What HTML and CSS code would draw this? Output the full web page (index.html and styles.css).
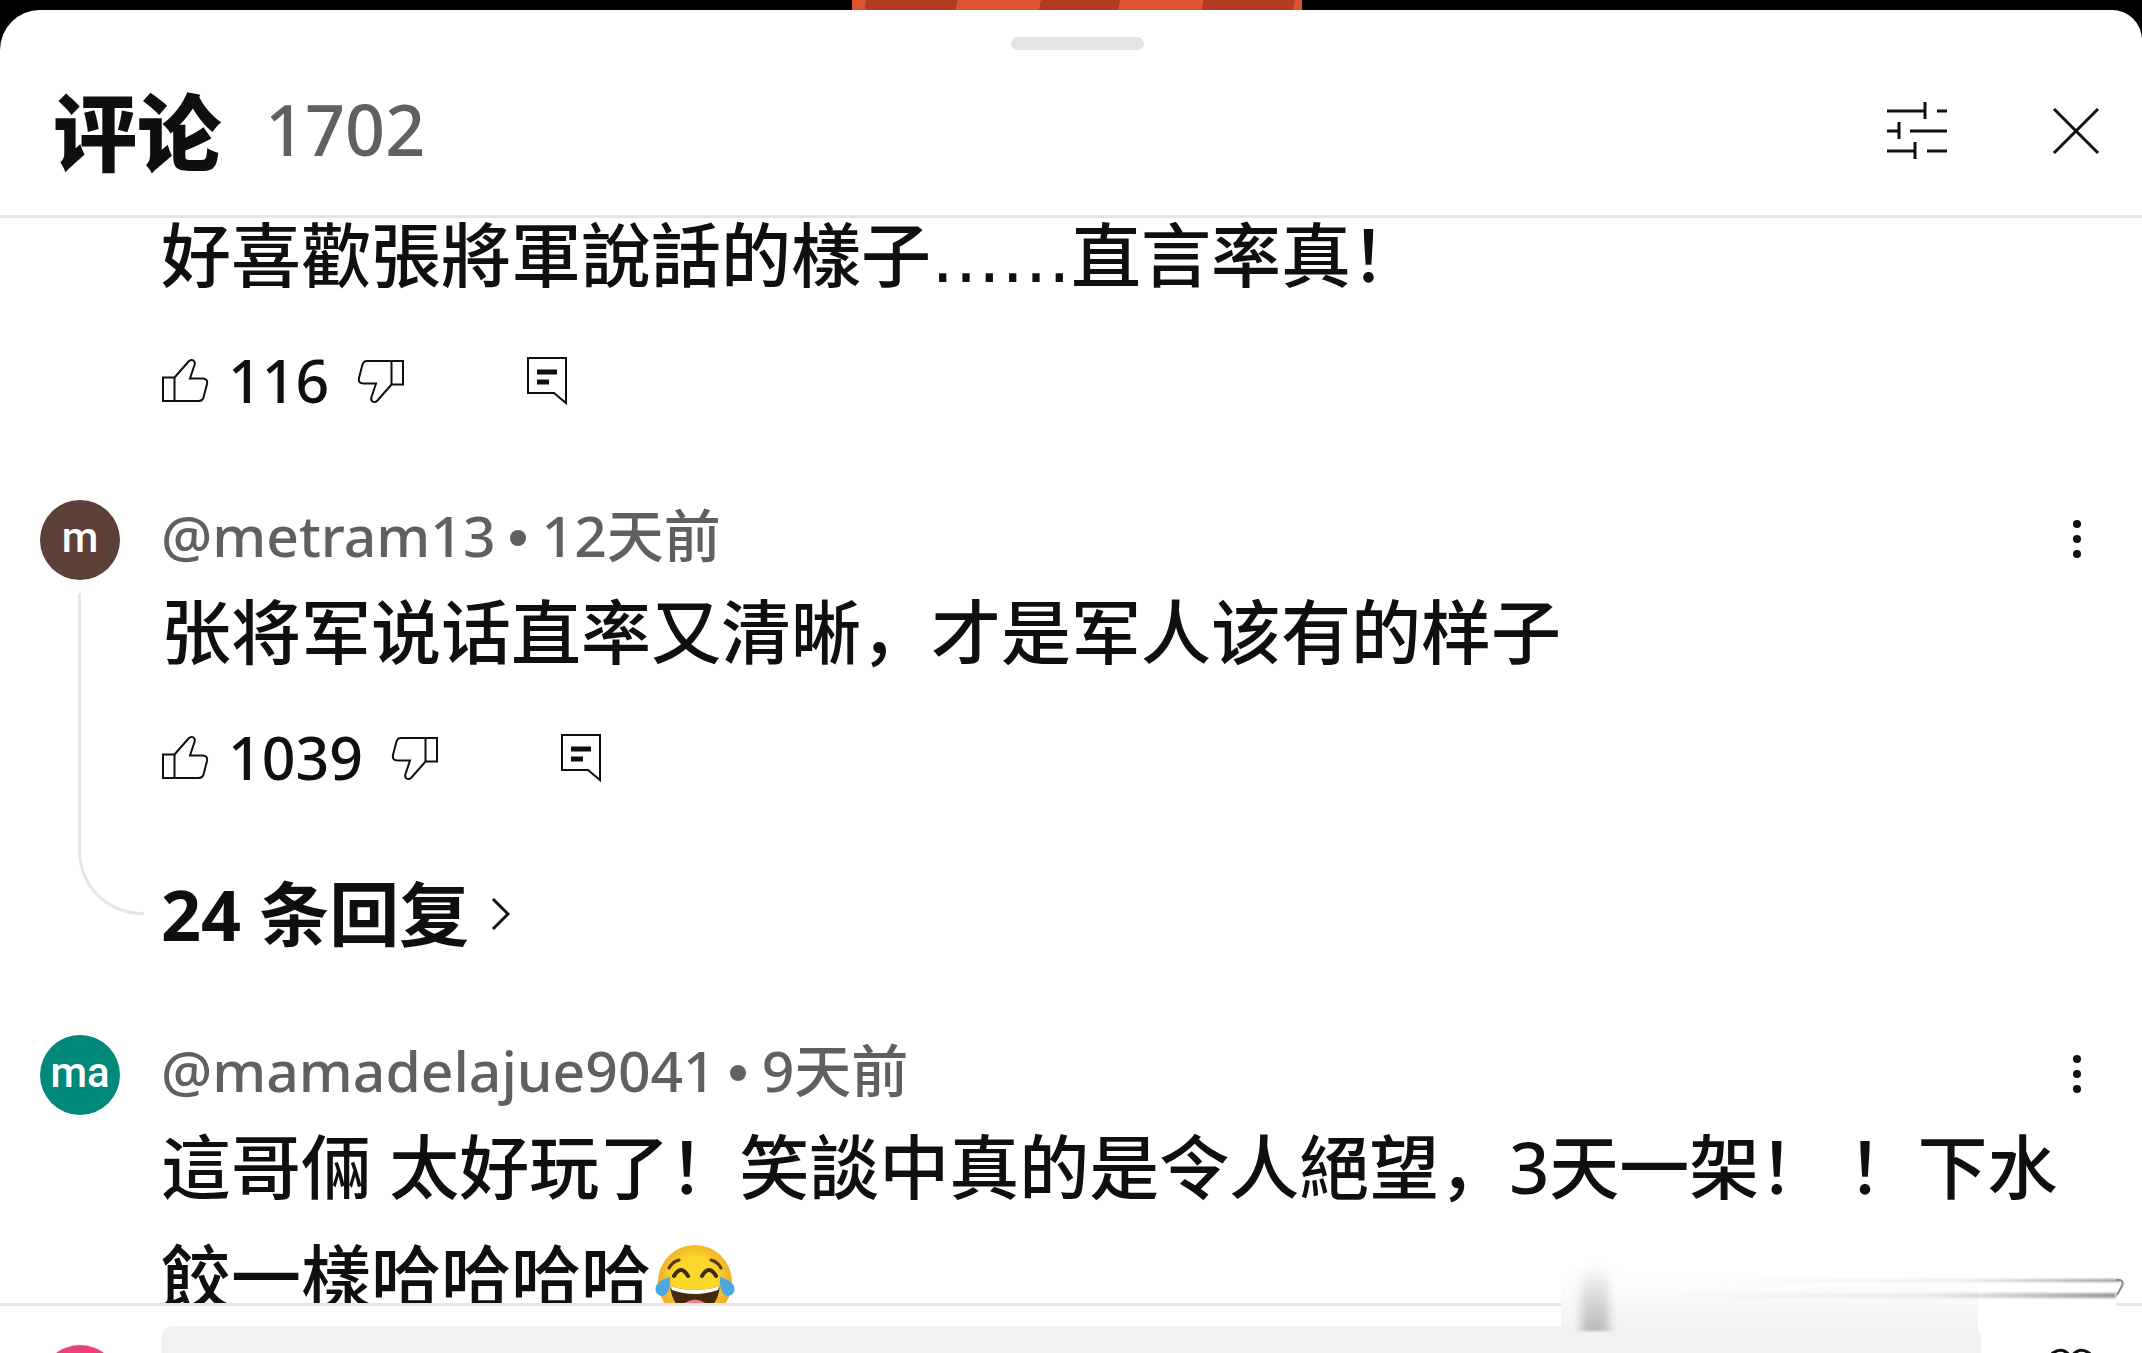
FILE: index.html
```html
<!DOCTYPE html>
<html lang="zh-CN">
<head>
  <meta charset="UTF-8" />
  <meta name="viewport" content="width=device-width, initial-scale=1.0" />
  <title>评论</title>
  <link rel="stylesheet" href="styles.css">
</head>
<body>

  <!-- shared icons -->
  <svg class="sprite" aria-hidden="true">
    <symbol id="icon-like" viewBox="0 0 48 48">
      <path d="M2 19.500H13.500V43H2ZM13.500 19.500L27.500 3.500Q30 1 32.500 2.500Q34.500 4 33.500 7L29 20.500H41.500Q47 20.500 46 26L42.500 39.500Q41.500 43 38 43H13.500"/>
    </symbol>
    <symbol id="icon-dislike" viewBox="0 0 48 48">
      <path d="M46 26.500H34.500V3H46ZM34.500 26.500L20.500 42.500Q18 45 15.500 43.500Q13.500 42 14.500 39L19 25.500H6.500Q1 25.500 2 20L5.500 6.500Q6.500 3 10 3H34.500"/>
    </symbol>
    <symbol id="icon-reply" viewBox="0 0 42 52">
      <path d="M2 2H40V47L28 37H2Z"/>
      <path class="thick" d="M11 16H31M11 26H23"/>
    </symbol>
    <symbol id="icon-more" viewBox="0 0 10 40">
      <circle cx="5" cy="5" r="4"/><circle cx="5" cy="20" r="4"/><circle cx="5" cy="35" r="4"/>
    </symbol>
  </svg>

  <div class="video"><div class="video-frame"></div></div>

  <main class="sheet">
    <div class="handle"></div>
    <header class="header">
      <h1>评论</h1>
      <span class="count">1702</span>
      <button class="icon-btn filter" aria-label="排序">
        <svg width="60" height="58" viewBox="0 0 60 58"><path d="M0 9H38M38 0V17M50 9H60M0 29H12M12 20V37M23 29H60M0 49H28M28 40V57M40 49H60"/></svg>
      </button>
      <button class="icon-btn close" aria-label="关闭">
        <svg width="48" height="48" viewBox="0 0 48 48"><path d="M2 2L46 46M46 2L2 46"/></svg>
      </button>
    </header>

    <section class="comments">
      <article class="comment">
        <div class="side"></div>
        <div class="content">
          <p class="text">好喜歡張將軍說話的樣子<span class="ellipsis">……</span>直言率真！</p>
          <div class="actions">
            <button class="action"><svg class="thumb"><use href="#icon-like"/></svg><span>116</span></button>
            <button class="action" aria-label="不喜欢"><svg class="thumb"><use href="#icon-dislike"/></svg></button>
            <button class="action reply" aria-label="回复"><svg class="bubble"><use href="#icon-reply"/></svg></button>
          </div>
        </div>
      </article>

      <article class="comment">
        <div class="side">
          <div class="avatar brown">m</div>
          <div class="thread"></div>
        </div>
        <div class="content">
          <div class="meta">
            <a href="#">@metram13</a><span class="dot"></span><span>12天前</span>
            <button class="icon-btn more" aria-label="更多"><svg width="10" height="40"><use href="#icon-more"/></svg></button>
          </div>
          <p class="text">张将军说话直率又清晰，才是军人该有的样子</p>
          <div class="actions">
            <button class="action"><svg class="thumb"><use href="#icon-like"/></svg><span>1039</span></button>
            <button class="action" aria-label="不喜欢"><svg class="thumb"><use href="#icon-dislike"/></svg></button>
            <button class="action reply" aria-label="回复"><svg class="bubble"><use href="#icon-reply"/></svg></button>
          </div>
          <button class="replies">24 条回复
            <svg width="20" height="34" viewBox="0 0 20 34"><path d="M2 2L17 17L2 32"/></svg>
          </button>
        </div>
      </article>

      <article class="comment">
        <div class="side">
          <div class="avatar teal">ma</div>
        </div>
        <div class="content">
          <div class="meta">
            <a href="#">@mamadelajue9041</a><span class="dot"></span><span>9天前</span>
            <button class="icon-btn more" aria-label="更多"><svg width="10" height="40"><use href="#icon-more"/></svg></button>
          </div>
          <p class="text">這哥倆 太好玩了！笑談中真的是令人絕望，3天一架！ ！下水餃一樣哈哈哈哈<svg class="emoji" viewBox="0 0 80 80" role="img" aria-label="笑哭">
              <defs>
                <radialGradient id="face" cx="50%" cy="45%" r="55%">
                  <stop offset="0.5" stop-color="#fbd72b"/>
                  <stop offset="1" stop-color="#eda52c"/>
                </radialGradient>
              </defs>
              <circle cx="40" cy="40" r="37" fill="url(#face)"/>
              <path d="M14 26Q17 20 24 18M56 18Q63 20 66 26" stroke="#5b3512" stroke-width="3" stroke-linecap="round" fill="none"/>
              <path d="M19 34Q26 22 33 34M47 34Q54 22 61 34" stroke="#422b0d" stroke-width="4" stroke-linecap="round" fill="none"/>
              <path d="M15 44Q40 52 65 44Q62 70 40 70Q18 70 15 44Z" fill="#422b0d"/>
              <path d="M15 44Q40 52 65 44L63 48Q40 56 17 48Z" fill="#fff"/>
              <path d="M27 63Q40 52 53 63Q48 70 40 70Q32 70 27 63Z" fill="#ee8183"/>
              <path d="M15 35Q16 54 6 54Q-1 52 1 44Q4 38 15 35ZM65 35Q64 54 74 54Q81 52 79 44Q76 38 65 35Z" fill="#4aa9e0"/>
            </svg></p>
        </div>
      </article>
    </section>

    <footer class="composer">
      <div class="side"><div class="avatar pink"></div></div>
      <input type="text" aria-label="添加评论">
      <button class="icon-btn thanks" aria-label="感谢">
        <svg width="50" height="46" viewBox="0 0 50 46"><path d="M25 44L5 23Q-1 12 7 5Q17 -2 25 9Q33 -2 43 5Q51 12 45 23Z"/></svg>
      </button>
    </footer>

    <!-- smudge over the lower right corner -->
    <svg class="smudge" viewBox="0 0 580 82" aria-hidden="true">
      <defs>
        <linearGradient id="fade" x1="0" y1="0" x2="0" y2="1">
          <stop offset="0" stop-color="#fff" stop-opacity="0"/>
          <stop offset="0.4" stop-color="#fbfbfb"/>
          <stop offset="1" stop-color="#f2f2f2"/>
        </linearGradient>
        <linearGradient id="dark" x1="0" y1="0" x2="0" y2="1">
          <stop offset="0" stop-color="#bbb" stop-opacity="0"/>
          <stop offset="1" stop-color="#bbb"/>
        </linearGradient>
        <linearGradient id="streak" x1="0" y1="0" x2="1" y2="0">
          <stop offset="0" stop-color="#aaa" stop-opacity="0"/>
          <stop offset="0.6" stop-color="#aaa" stop-opacity="0.2"/>
          <stop offset="1" stop-color="#999"/>
        </linearGradient>
        <filter id="soft" x="-50%" y="-20%" width="200%" height="140%"><feGaussianBlur stdDeviation="5 1"/></filter>
        <filter id="haze" x="-5%" y="-200%" width="110%" height="500%"><feGaussianBlur stdDeviation="1"/></filter>
      </defs>
      <rect x="1" y="12" width="417" height="64" fill="url(#fade)"/>
      <rect x="418" y="20" width="138" height="50" fill="#fff"/>
      <rect x="21" y="10" width="28" height="68" fill="url(#dark)" filter="url(#soft)"/>
      <rect x="150" y="26" width="410" height="3" fill="url(#streak)" filter="url(#haze)"/>
      <rect x="100" y="40" width="456" height="5" fill="url(#streak)" filter="url(#haze)"/>
      <path d="M556 27H560Q564 28 562 33L557 42" fill="none" stroke="#888" stroke-width="2"/>
    </svg>
  </main>

</body>
</html>
```
FILE: styles.css
```css
* {
  box-sizing: border-box;
}

body {
  margin: 0;
  height: 100vh;
  display: flex;
  flex-direction: column;
  overflow: hidden;
  background: #000;
  color: #0f0f0f;
  font-family: "Noto Sans", "Noto Sans CJK SC", sans-serif;
}

button {
  border: none;
  background: none;
  padding: 0;
  color: inherit;
  font: inherit;
  cursor: pointer;
}

svg {
  display: block;
  fill: none;
  stroke: #0f0f0f;
  stroke-width: 3;
}

.sprite {
  position: absolute;
  width: 0;
  height: 0;
}

.video {
  height: 10px;
  padding-left: 12px;
  flex: none;
}

.video-frame {
  width: 450px;
  height: 10px;
  margin: 0 auto;
  background: linear-gradient(100deg, #d9542f 14px, #b23b23 14px 104px, #d9542f 104px 186px, #b23b23 186px 264px, #d9542f 264px 346px, #b23b23 346px 436px, #d9542f 436px);
}

.sheet {
  flex: 1;
  min-height: 0;
  display: flex;
  flex-direction: column;
  position: relative;
  background: #fff;
  border-radius: 40px 30px 0 0;
  overflow: hidden;
}

.handle {
  flex: none;
  width: 133px;
  height: 13px;
  margin: 27px auto 0;
  position: relative;
  left: 6px;
  border-radius: 7px;
  background: #e5e5e5;
}

.header {
  flex: none;
  height: 168px;
  display: flex;
  align-items: center;
  padding: 0 42px 4px 53px;
  border-bottom: 3px solid #e5e5e5;
}

h1 {
  margin: 0;
  padding-top: 4px;
  font-size: 84px;
  font-weight: 900;
  line-height: 100px;
}

.count {
  margin-left: 44px;
  padding-bottom: 4px;
  font-size: 70px;
  font-weight: 500;
  line-height: 100px;
  color: #606060;
}

.filter {
  margin-left: auto;
}

.close {
  margin-left: 105px;
}

.comments {
  flex: 1;
  min-height: 0;
  overflow: hidden;
}

/* list is scrolled part way into the first comment */
.comment:first-child {
  margin-top: -18px;
}

.comment {
  display: flex;
}

.side {
  flex: none;
  width: 161px;
  padding-left: 40px;
  display: flex;
  flex-direction: column;
}

.avatar {
  flex: none;
  width: 80px;
  height: 80px;
  border-radius: 50%;
  color: #fff;
  font-family: Roboto, sans-serif;
  font-size: 42px;
  font-weight: 500;
  line-height: 76px;
  text-align: center;
}

.brown {
  background: #5d4037;
}

.teal {
  background: #00897b;
}

.pink {
  background: #ec407a;
}

.thread {
  flex: 1;
  width: 66px;
  margin: 13px 0 120px 38px;
  border-left: 3px solid #e5e5e5;
  border-bottom: 3px solid #e5e5e5;
  border-bottom-left-radius: 64px;
}

.content {
  flex: 1;
  min-width: 0;
  padding-right: 60px;
}

.meta {
  height: 77px;
  padding-bottom: 6px;
  display: flex;
  align-items: center;
  font-size: 57px;
  font-weight: 500;
  line-height: 71px;
  color: #606060;
}

.meta a {
  color: inherit;
  text-decoration: none;
}

.dot {
  width: 16px;
  height: 16px;
  margin: 4px 16px 0 14px;
  border-radius: 50%;
  background: #606060;
}

.more {
  margin: 6px 0 0 auto;
}

.more svg {
  fill: #0f0f0f;
  stroke: none;
}

.text {
  margin: 0;
  font-size: 70px;
  font-weight: 500;
  line-height: 110px;
}

.ellipsis {
  font-family: "DejaVu Sans", sans-serif;
  line-height: 1;
}

.emoji {
  display: inline-block;
  width: 80px;
  height: 80px;
  margin-left: 4px;
  vertical-align: -18px;
  stroke: none;
}

.actions {
  display: flex;
  align-items: center;
  height: 56px;
  margin: 44px 0 90px;
}

.action {
  display: flex;
  align-items: center;
  font-size: 59px;
  font-weight: 500;
  line-height: 56px;
}

.action span {
  margin: 0 28px 0 19px;
  padding-bottom: 4px;
}

.thumb {
  width: 48px;
  height: 48px;
}

.bubble {
  width: 42px;
  height: 52px;
}

.bubble,
.thumb {
  flex: none;
  stroke-width: 2;
}

.thick {
  stroke-width: 5;
}

.reply {
  margin-left: 121px;
}

.replies {
  display: flex;
  align-items: center;
  gap: 22px;
  height: 80px;
  padding-bottom: 6px;
  margin-bottom: 78px;
  font-size: 70px;
  font-weight: 700;
  line-height: 74px;
}

.composer {
  flex: none;
  display: flex;
  align-items: flex-start;
  height: 50px;
  padding: 20px 46px 0 0;
  border-top: 3px solid #e5e5e5;
}

.composer .side {
  padding-top: 19px;
}

.composer input {
  flex: 1;
  min-width: 0;
  height: 112px;
  border: none;
  border-radius: 12px;
  background: #f1f1f1;
  font-size: 57px;
}

.thanks {
  margin: 22px 0 0 65px;
}

.smudge {
  position: absolute;
  right: 2px;
  bottom: 18px;
  width: 580px;
  height: 82px;
  stroke: none;
}
```
